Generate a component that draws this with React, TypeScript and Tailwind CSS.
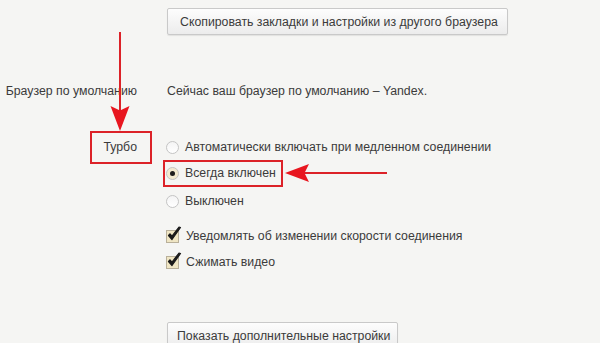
import React from "react";

const Radio = ({ checked }: { checked?: boolean }) => (
  <span
    className={
      "relative inline-flex h-[13px] w-[13px] shrink-0 items-center justify-center rounded-full border border-[#c4c4c4] " +
      (checked ? "bg-[#f3ead0]" : "bg-gradient-to-b from-[#f4f4f4] to-[#ffffff]")
    }
  >
    {checked && <span className="h-[5px] w-[5px] rounded-full bg-[#1e1e1e]" />}
  </span>
);

const Check = () => (
  <span className="relative inline-block h-[14px] w-[14px] shrink-0">
    <span className="absolute left-0 top-[1px] h-[13px] w-[13px] border border-[#b9b09a] bg-[#f0e6c4]" />
    <svg className="absolute left-[1px] top-[-3px]" width="15" height="16" viewBox="0 0 15 16">
      <path d="M1.5 9.5 L5 13.5 L13.5 1.5 L12 1 L5 10.2 L3 7.8 Z" fill="#1a1a1a" stroke="#1a1a1a" strokeWidth="1.2" strokeLinejoin="round" />
    </svg>
  </span>
);

const Option = ({ children, icon }: { children: React.ReactNode; icon: React.ReactNode }) => (
  <div className="flex h-[26px] items-center gap-[6px] pl-[166px]">
    {icon}
    <span>{children}</span>
  </div>
);

export default function App() {
  return (
    <div
      className="relative h-[343px] w-[600px] overflow-hidden whitespace-nowrap bg-[#f5f5f3] text-[12.3px] leading-[18px] text-[#3b3b3b]"
      style={{ fontFamily: '"Liberation Sans", Arial, sans-serif' }}
    >
      <div className="pl-[167px] pt-[8px]">
        <div className="flex h-[27px] w-[341px] items-center rounded-[2px] border border-[#c9c9c9] bg-gradient-to-b from-[#fdfdfd] to-[#ececec] pl-[12px] shadow-[0_1px_1px_rgba(0,0,0,0.08)]">
          Скопировать закладки и настройки из другого браузера
        </div>
      </div>

      <div className="mt-[47px] grid h-[18px] grid-cols-[167px_1fr]">
        <div className="pr-[30px] text-right">Браузер по умолчанию</div>
        <div>Сейчас ваш браузер по умолчанию – Yandex.</div>
      </div>

      <div className="relative mt-[34px]">
        <div className="absolute left-0 top-0 flex h-[26px] w-[137px] items-center justify-end">Турбо</div>
        <Option icon={<Radio />}>Автоматически включать при медленном соединении</Option>
        <Option icon={<Radio checked />}>Всегда включен</Option>
        <div className="mt-[2px]">
          <Option icon={<Radio />}>Выключен</Option>
        </div>
        <div className="mt-[9px]">
          <Option icon={<Check />}>Уведомлять об изменении скорости соединения</Option>
          <Option icon={<Check />}>Сжимать видео</Option>
        </div>
      </div>

      <div className="mt-[47px] pl-[167px]">
        <div className="flex h-[27px] w-[231px] items-center rounded-[2px] border border-[#c9c9c9] bg-gradient-to-b from-[#fdfdfd] to-[#ececec] pl-[9px] shadow-[0_1px_1px_rgba(0,0,0,0.08)]">
          Показать дополнительные настройки
        </div>
      </div>

      <svg className="pointer-events-none absolute inset-0" width="600" height="343" viewBox="0 0 600 343">
        <rect x="91" y="132" width="60" height="31" fill="none" stroke="#dc2228" strokeWidth="2" />
        <rect x="164" y="161" width="118" height="25" fill="none" stroke="#dc2228" strokeWidth="2" />
        <line x1="120" y1="32" x2="120" y2="112" stroke="#dc2228" strokeWidth="2" />
        <path d="M120 131 L110.5 106 L120 110.5 L129.5 106 Z" fill="#e8161f" />
        <line x1="387" y1="173" x2="302" y2="173" stroke="#dc2228" strokeWidth="2" />
        <path d="M285 173 L309 164 L304.5 173 L309 182 Z" fill="#e8161f" />
      </svg>
    </div>
  );
}
